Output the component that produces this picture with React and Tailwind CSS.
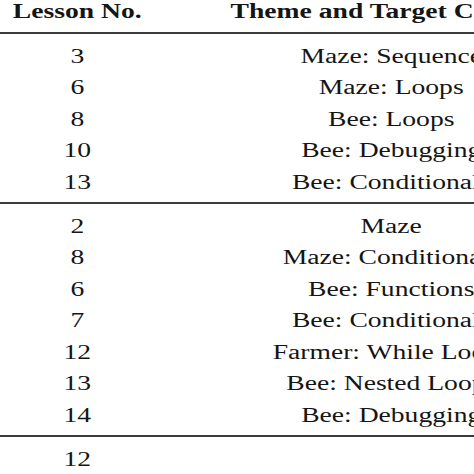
const groups = [
  [
    ["3", "Maze: Sequence"],
    ["6", "Maze: Loops"],
    ["8", "Bee: Loops"],
    ["10", "Bee: Debugging"],
    ["13", "Bee: Conditionals"],
  ],
  [
    ["2", "Maze"],
    ["8", "Maze: Conditionals"],
    ["6", "Bee: Functions"],
    ["7", "Bee: Conditionals"],
    ["12", "Farmer: While Loops"],
    ["13", "Bee: Nested Loops"],
    ["14", "Bee: Debugging"],
  ],
  [["12", ""]],
];

function Row({ lesson, theme }) {
  return (
    <div className="flex leading-[31.5px]">
      <div className="w-[112px] shrink-0 text-center">{lesson}</div>
      <div className="w-[343px] shrink-0 text-center whitespace-nowrap">{theme}</div>
    </div>
  );
}

export default function App() {
  return (
    <div className="w-[474px] h-[474px] overflow-hidden bg-white">
      <div className="w-[520px] origin-top-left scale-x-[1.38] font-['Liberation_Serif',serif] text-[20px] text-[#151515]">
        {/* header */}
        <div className="flex font-bold leading-[23px] pb-[9px]">
          <div className="w-[112px] shrink-0 text-center">Lesson No.</div>
          <div className="w-[343px] shrink-0 text-center whitespace-nowrap">Theme and Target Concept</div>
        </div>
        <div className="h-[2px] bg-[#3c3c3c]" />

        {groups.map((rows, i) => (
          <div key={i}>
            <div className="pt-[6.5px] pb-[4px]">
              {rows.map(([lesson, theme], j) => (
                <Row key={j} lesson={lesson} theme={theme} />
              ))}
            </div>
            {i < groups.length - 1 && <div className="h-[2px] bg-[#3c3c3c]" />}
          </div>
        ))}
      </div>
    </div>
  );
}
